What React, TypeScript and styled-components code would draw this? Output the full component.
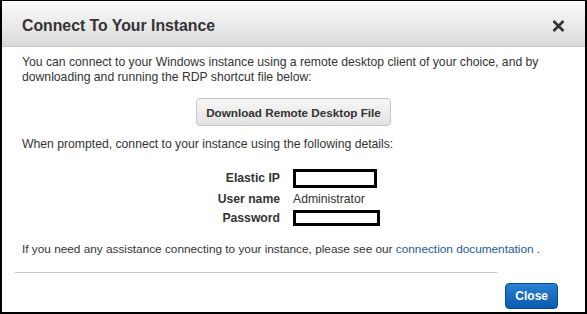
import React from 'react';
import styled, { createGlobalStyle } from 'styled-components';

const GlobalStyle = createGlobalStyle`
  html, body { margin: 0; padding: 0; background: #fff; }
  body { font-family: "Liberation Sans", Arial, sans-serif; }
`;

const Frame = styled.div`
  box-sizing: border-box;
  width: 587px;
  height: 314px;
  border-style: solid;
  border-color: #000;
  border-width: 1px 2px 2px 2px;
  background: #fff;
  display: flex;
  flex-direction: column;
  overflow: hidden;
`;

const Header = styled.div`
  box-sizing: border-box;
  height: 46px;
  flex: none;
  display: flex;
  align-items: center;
  justify-content: space-between;
  padding: 4px 20px 0 20px;
  background: linear-gradient(#fbfbfb, #dadada);
  border-bottom: 1px solid #c8c8c8;
`;

const Title = styled.h1`
  margin: 0;
  font-size: 15.8px;
  font-weight: bold;
  color: #333;
`;

const CloseX = styled.button`
  display: flex;
  border: none;
  background: none;
  padding: 0;
`;

const Body = styled.div`
  padding: 8px 20px 0 20px;
  font-size: 12.2px;
  line-height: 14.5px;
  color: #333;
`;

const Para = styled.p<{ $mt?: number; $size?: number }>`
  margin: ${(p) => p.$mt ?? 0}px 0 0 0;
  ${(p) => (p.$size ? `font-size: ${p.$size}px;` : '')}
`;

const ButtonRow = styled.div`
  display: flex;
  justify-content: center;
  margin-top: 14px;
`;

const GreyButton = styled.button`
  height: 28px;
  padding: 0 9px;
  border: 1px solid #c4c4c4;
  border-radius: 4px;
  background: linear-gradient(#f7f7f7, #e2e2e2);
  font-family: "Liberation Sans", Arial, sans-serif;
  font-size: 11.7px;
  font-weight: bold;
  color: #333;
`;

const Details = styled.div`
  display: grid;
  grid-template-columns: 258px auto;
  column-gap: 13px;
  row-gap: 4px;
  margin-top: 17px;
  align-items: center;
`;

const Label = styled.div`
  text-align: right;
  font-weight: bold;
`;

const Redacted = styled.div<{ $w: number; $h: number }>`
  box-sizing: border-box;
  width: ${(p) => p.$w}px;
  height: ${(p) => p.$h}px;
  border: 3px solid #000;
  background: #fff;
`;

const Link = styled.a`
  color: #1d5a9a;
  text-decoration: none;
`;

const Rule = styled.hr`
  margin: 15px 68px 0 -7px;
  border: none;
  border-top: 1px solid #c6c6c6;
`;

const Footer = styled.div`
  display: flex;
  justify-content: flex-end;
  padding: 10px 27px 0 0;
`;

const BlueButton = styled.button`
  height: 26px;
  padding: 0 9px;
  border: 1px solid #0a4c94;
  border-radius: 4px;
  background: linear-gradient(#2a7fd2, #0b5cb0);
  font-family: "Liberation Sans", Arial, sans-serif;
  font-size: 12px;
  font-weight: bold;
  color: #fff;
`;

export default function App() {
  return (
    <>
      <GlobalStyle />
      <Frame>
        <Header>
          <Title>Connect To Your Instance</Title>
          <CloseX aria-label="Close">
            <svg width="13" height="12" viewBox="0 0 13 12">
              <path d="M1.5 1 L11.5 11 M11.5 1 L1.5 11" stroke="#333" strokeWidth="2.6" />
            </svg>
          </CloseX>
        </Header>
        <Body>
          <Para>
            You can connect to your Windows instance using a remote desktop client of your choice, and by
            downloading and running the RDP shortcut file below:
          </Para>
          <ButtonRow>
            <GreyButton>Download Remote Desktop File</GreyButton>
          </ButtonRow>
          <Para $mt={11}>When prompted, connect to your instance using the following details:</Para>
          <Details>
            <Label>Elastic IP</Label>
            <Redacted $w={84} $h={19} />
            <Label>User name</Label>
            <div>Administrator</div>
            <Label>Password</Label>
            <Redacted $w={87} $h={16} />
          </Details>
          <Para $mt={16} $size={11.8}>
            If you need any assistance connecting to your instance, please see our{' '}
            <Link href="#">connection documentation</Link> .
          </Para>
          <Rule />
        </Body>
        <Footer>
          <BlueButton>Close</BlueButton>
        </Footer>
      </Frame>
    </>
  );
}
